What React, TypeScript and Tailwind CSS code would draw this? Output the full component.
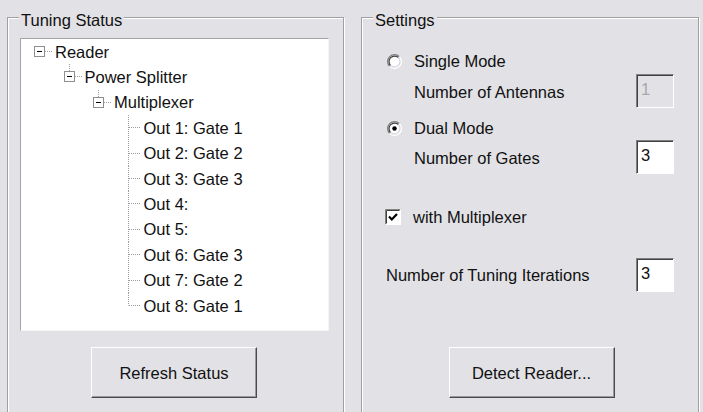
import React from "react"

type TreeNode = { label: string; level: number; box?: boolean; stub?: boolean; last?: boolean }

const nodes: TreeNode[] = [
    { label: "Reader", level: 0, box: true },
    { label: "Power Splitter", level: 1, box: true, stub: true },
    { label: "Multiplexer", level: 2, box: true, stub: true },
    { label: "Out 1: Gate 1", level: 3 },
    { label: "Out 2: Gate 2", level: 3 },
    { label: "Out 3: Gate 3", level: 3 },
    { label: "Out 4:", level: 3 },
    { label: "Out 5:", level: 3 },
    { label: "Out 6: Gate 3", level: 3 },
    { label: "Out 7: Gate 2", level: 3 },
    { label: "Out 8: Gate 1", level: 3, last: true },
]

const indent = ["pl-[4px]", "pl-[33.5px]", "pl-[63px]", "pl-[92.5px]"]

function Gutter({ box, stub, last }: { box?: boolean; stub?: boolean; last?: boolean }) {
    const dot = { stroke: "#9a9a9a", strokeDasharray: "1 1" }
    return (
        <svg width="28" height="25.4" viewBox="0 0 28 25.4" className="shrink-0">
            {!box && <line x1="14.5" y1="0" x2="14.5" y2={last ? 12.5 : 25.4} {...dot} />}
            {stub && <line x1="14.5" y1="0" x2="14.5" y2="7" {...dot} />}
            <line x1={box ? 20 : 15} y1="12.5" x2="27" y2="12.5" {...dot} />
            {box && (
                <g>
                    <rect x="9.5" y="7.5" width="10" height="10" fill="#fff" stroke="#8f8f8f" />
                    <line x1="12" y1="12.5" x2="17" y2="12.5" stroke="#000" />
                </g>
            )}
        </svg>
    )
}

function Radio({ checked }: { checked?: boolean }) {
    return (
        <svg width="15" height="15" viewBox="0 0 12 12" className="shrink-0">
            <circle cx="6" cy="6" r="5" fill="#fff" />
            <path d="M2.11 9.89 A5.5 5.5 0 0 1 9.89 2.11" fill="none" stroke="#808080" />
            <path d="M2.82 9.18 A4.5 4.5 0 0 1 9.18 2.82" fill="none" stroke="#404040" />
            <path d="M9.89 2.11 A5.5 5.5 0 0 1 2.11 9.89" fill="none" stroke="#fff" />
            <path d="M9.18 2.82 A4.5 4.5 0 0 1 2.82 9.18" fill="none" stroke="#d8d6dc" />
            {checked && <circle cx="6" cy="6" r="1.8" fill="#000" />}
        </svg>
    )
}

function Check() {
    return (
        <svg width="16" height="16" viewBox="0 0 16 16" className="shrink-0">
            <rect x="0" y="0" width="16" height="16" fill="#fff" />
            <path d="M0.5 15.5 V0.5 H15.5" fill="none" stroke="#808080" />
            <path d="M1.5 14.5 V1.5 H14.5" fill="none" stroke="#404040" />
            <path d="M15.5 0.5 V15.5 H0.5" fill="none" stroke="#fff" />
            <path d="M4 7.5 L6.8 10.5 L12 5" fill="none" stroke="#000" strokeWidth="2.2" />
        </svg>
    )
}

function Field({ value, disabled }: { value: string; disabled?: boolean }) {
    return (
        <div
            className={
                "w-[38px] h-[34px] border border-t-[#808080] border-l-[#808080] border-r-white border-b-white shadow-[inset_1px_1px_0_#404040] pl-[4px] pt-[4px] leading-[20px] " +
                (disabled ? "bg-[#e2e1e6] text-[#a8a8a8]" : "bg-white")
            }
        >
            {value}
        </div>
    )
}

function Button({ children }: { children: React.ReactNode }) {
    return (
        <button className="w-[166px] h-[51px] mx-auto block border border-t-white border-l-white border-r-[#4a4a4a] border-b-[#4a4a4a] shadow-[inset_-1px_-1px_0_#9a9a9a] bg-[#e2e1e6] text-[#111]">
            {children}
        </button>
    )
}

const fieldset =
    "h-[420px] shrink-0 border border-[#a0a0a0] shadow-[inset_1px_1px_0_#fff,1px_1px_0_#fff] pl-[12px] pt-[8px]"
const legend = "ml-[-1px] px-[2px] pt-[6px] leading-[20px] bg-[#e2e1e6]"

export default function App() {
    return (
        <div className="w-[703px] h-[412px] overflow-hidden bg-[#e2e1e6] flex gap-[17px] pl-[7px] pt-[4px] text-[16.5px] leading-[20px] text-[#111] font-['Liberation_Sans',Arial,sans-serif]">
            <fieldset className={fieldset + " w-[337px]"}>
                <legend className={legend}>Tuning Status</legend>
                <div className="w-[309px] h-[293px] bg-white border border-t-[#a4a4a4] border-l-[#a4a4a4] border-r-[#f4f4f4] border-b-[#f4f4f4]">
                    {nodes.map((n) => (
                        <div key={n.label} className={"flex items-center h-[25.4px] " + indent[n.level]}>
                            <Gutter box={n.box} stub={n.stub} last={n.last} />
                            <span className="ml-[2px] whitespace-nowrap">{n.label}</span>
                        </div>
                    ))}
                </div>
                <div className="mt-[16px] pr-[15px]">
                    <Button>Refresh Status</Button>
                </div>
            </fieldset>

            <fieldset className={fieldset + " w-[338px]"}>
                <legend className={legend}>Settings</legend>
                <div className="pl-[13px] pr-[24px] flex flex-col">
                    <div className="mt-[10px] h-[26px] flex items-center gap-[12px]">
                        <Radio />
                        <span>Single Mode</span>
                    </div>
                    <div className="h-[34px] flex items-center justify-between pl-[27px]">
                        <span className="mt-[2px]">Number of Antennas</span>
                        <Field value="1" disabled />
                    </div>
                    <div className="mt-[8px] h-[24px] flex items-center gap-[12px]">
                        <Radio checked />
                        <span>Dual Mode</span>
                    </div>
                    <div className="h-[34px] flex items-center justify-between pl-[27px]">
                        <span className="mt-[2px]">Number of Gates</span>
                        <Field value="3" />
                    </div>
                    <div className="mt-[30px] h-[26px] flex items-center gap-[12px] ml-[-2px]">
                        <Check />
                        <span>with Multiplexer</span>
                    </div>
                    <div className="mt-[28px] h-[34px] flex items-center justify-between ml-[-1px]">
                        <span>Number of Tuning Iterations</span>
                        <Field value="3" />
                    </div>
                    <div className="mt-[55px] ml-[-13px] mr-[-24px] pr-[9px]">
                        <Button>Detect Reader...</Button>
                    </div>
                </div>
            </fieldset>
        </div>
    )
}
